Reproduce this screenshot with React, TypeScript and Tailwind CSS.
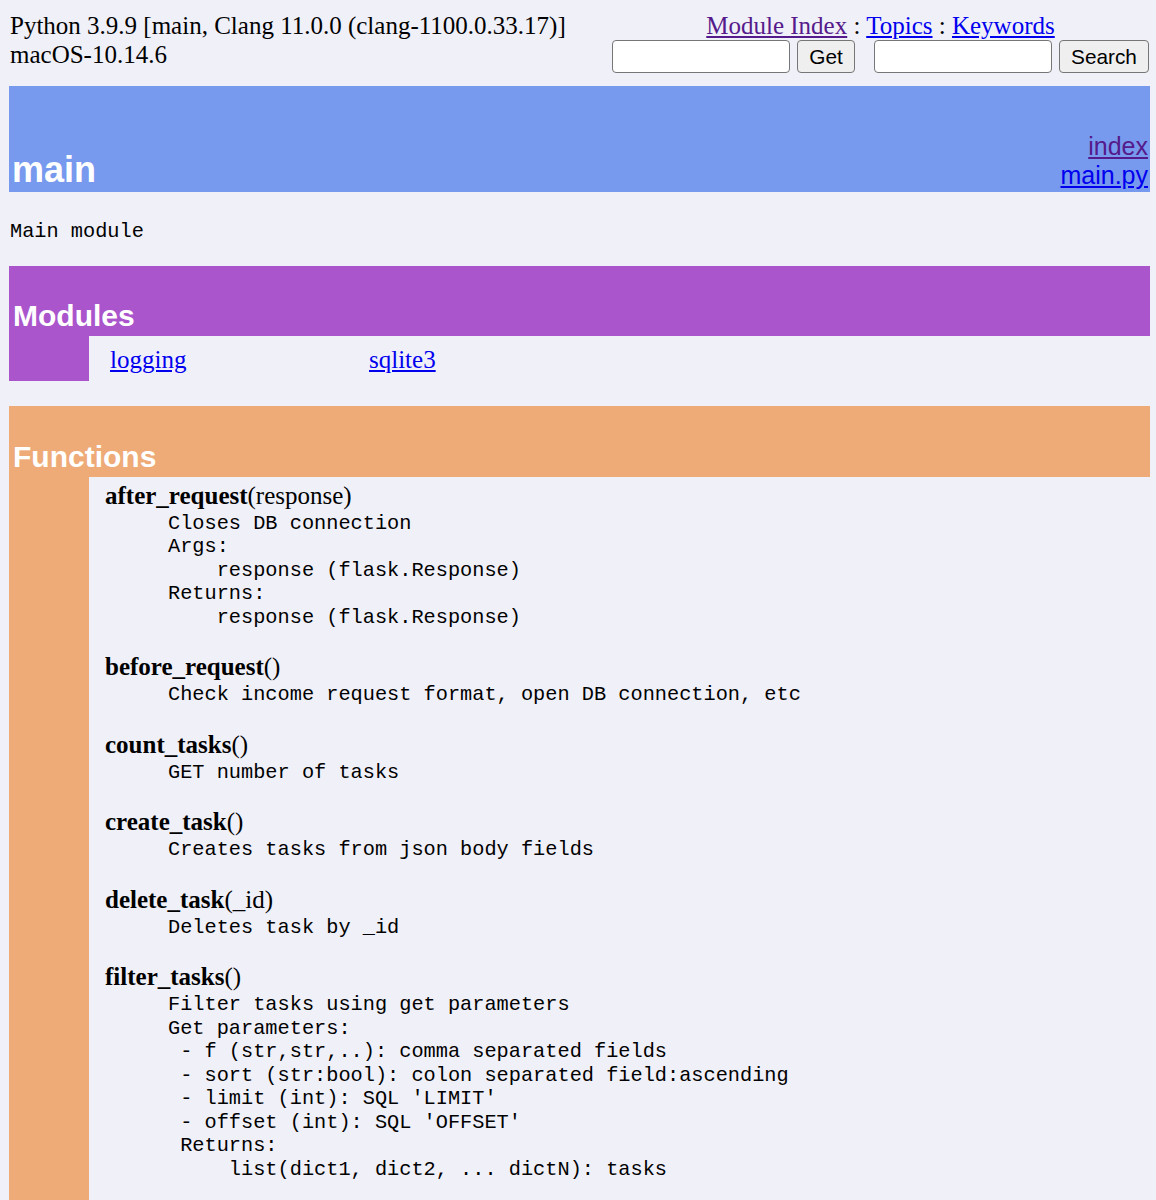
import React from "react";

const serif = { fontFamily: '"Liberation Serif", "Times New Roman", serif' } as const;

const sans = "font-['Liberation_Sans',Arial,sans-serif]";
const mono = "font-['Liberation_Mono','Courier_New',monospace]";

type Fn = { name: string; args: string; doc: string };

const fns: Fn[] = [
  {
    name: "after_request",
    args: "(response)",
    doc: "Closes DB connection\nArgs:\n    response (flask.Response)\nReturns:\n    response (flask.Response)",
  },
  {
    name: "before_request",
    args: "()",
    doc: "Check income request format, open DB connection, etc",
  },
  { name: "count_tasks", args: "()", doc: "GET number of tasks" },
  { name: "create_task", args: "()", doc: "Creates tasks from json body fields" },
  { name: "delete_task", args: "(_id)", doc: "Deletes task by _id" },
  {
    name: "filter_tasks",
    args: "()",
    doc:
      "Filter tasks using get parameters\nGet parameters:\n - f (str,str,..): comma separated fields\n - sort (str:bool): colon separated field:ascending\n - limit (int): SQL 'LIMIT'\n - offset (int): SQL 'OFFSET'\n Returns:\n     list(dict1, dict2, ... dictN): tasks",
  },
];

function Input() {
  return (
    <div className="w-[178px] h-[33px] bg-white border border-[#767676] rounded-[4px]" />
  );
}

function Button({ label, w }: { label: string; w: string }) {
  return (
    <div
      className={`${w} h-[33px] bg-[#efefef] border border-[#767676] rounded-[4px] flex items-center justify-center text-[20.8px] text-black ${sans}`}
    >
      {label}
    </div>
  );
}

export default function App() {
  return (
    <div className="min-h-[1200px] bg-[#f0f0f8] text-black pl-[9px] pr-[6px] pt-[11px]" style={serif}>
      {/* Top bar */}
      <div className="flex justify-between items-start">
        <div className="text-[25px] leading-[29px] pl-[1px]">
          <div>Python 3.9.9 [main, Clang 11.0.0 (clang-1100.0.33.17)]</div>
          <div>macOS-10.14.6</div>
        </div>
        <div className="flex flex-col items-center pr-[1px]">
          <div className="text-[25px] leading-[29px]">
            <a href="#" className="text-[#551a8b] underline">Module Index</a>
            {" : "}
            <a href="#" className="text-[#0000ee] underline">Topics</a>
            {" : "}
            <a href="#" className="text-[#0000ee] underline">Keywords</a>
          </div>
          <div className="flex items-center">
            <Input />
            <div className="w-[7px]" />
            <Button label="Get" w="w-[58px]" />
            <div className="w-[19px]" />
            <Input />
            <div className="w-[7px]" />
            <Button label="Search" w="w-[90px]" />
          </div>
        </div>
      </div>

      {/* Blue heading */}
      <div className="mt-[13px] h-[106px] bg-[#7799ee] flex justify-between items-end px-[2px] pb-[2px]">
        <div className={`text-white text-[36px] leading-[41px] font-bold ${sans} pl-[1px]`}>main</div>
        <div className={`text-[25px] leading-[29px] text-right ${sans}`}>
          <div>
            <a href="#" className="text-[#551a8b] underline">index</a>
          </div>
          <div>
            <a href="#" className="text-[#0000ee] underline">main.py</a>
          </div>
        </div>
      </div>

      {/* Doc */}
      <div className={`mt-[26px] text-[20.3px] leading-[23.5px] ${mono} pl-[1px] translate-y-[2px]`}>Main module</div>

      {/* Modules */}
      <div className="mt-[24.5px]">
        <div className="h-[70px] bg-[#aa55cc] flex items-end px-[2px] pb-[2px]">
          <div className={`text-white text-[30px] leading-[35px] font-bold ${sans} pl-[2px] translate-y-[-1px]`}>Modules</div>
        </div>
        <div className="flex">
          <div className="w-[80px] h-[45px] bg-[#aa55cc]" />
          <div className="flex-1 pl-[21px] pt-[9px] grid grid-cols-[259px_259px_259px_259px] text-[25px] leading-[29px]">
            <a href="#" className="text-[#0000ee] underline">logging</a>
            <a href="#" className="text-[#0000ee] underline">sqlite3</a>
          </div>
        </div>
      </div>

      {/* Functions */}
      <div className="mt-[25px]">
        <div className="h-[71px] bg-[#eeaa77] flex items-end px-[2px] pb-[2px]">
          <div className={`text-white text-[30px] leading-[35px] font-bold ${sans} pl-[2px] translate-y-[-1px]`}>Functions</div>
        </div>
        <div className="flex">
          <div className="w-[80px] bg-[#eeaa77] shrink-0" />
          <div className="flex-1 pl-[16px] pt-[3.5px] pb-[30px] flex flex-col gap-[25px]">
            {fns.map((f) => (
              <div key={f.name}>
                <div className="text-[25px] leading-[29px]">
                  <strong className="font-bold">{f.name}</strong>
                  {f.args}
                </div>
                <div className={`ml-[63px] text-[20.3px] leading-[23.5px] whitespace-pre ${mono} translate-y-[2px]`}>{f.doc}</div>
              </div>
            ))}
          </div>
        </div>
      </div>
    </div>
  );
}
